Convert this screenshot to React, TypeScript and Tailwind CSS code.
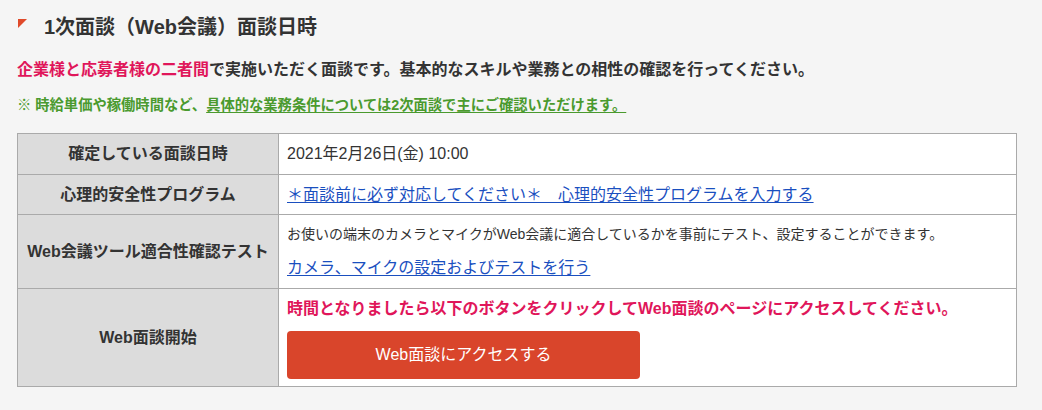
export default function App() {
  const font = { fontFamily: '"Liberation Sans", "Noto Sans CJK JP", sans-serif' };
  return (
    <div className="min-h-[410px] w-[1042px] bg-[#f5f5f5] text-[#333] px-[17px] pt-[12px]" style={font}>
      <div className="flex items-center h-[30px]">
        <span className="ml-[1px] mt-[-8px] w-0 h-0 border-t-[9px] border-t-[#e04a2a] border-r-[9px] border-r-transparent" />
        <h1 className="ml-[17px] text-[20px] font-bold leading-[30px] text-[#333]">1次面談（Web会議）面談日時</h1>
      </div>

      <p className="mt-[16px] text-[16px] font-bold leading-[24px]">
        <span className="text-[#e0165a]">企業様と応募者様の二者間</span>で実施いただく面談です。基本的なスキルや業務との相性の確認を行ってください。
      </p>

      <p className="mt-[13px] text-[14.3px] font-bold leading-[20px] text-[#4a9a2e]">
        ※ 時給単価や稼働時間など、<span className="underline underline-offset-2">具体的な業務条件については2次面談で主にご確認いただけます。 </span>
      </p>

      <table className="mt-[18px] w-[1000px] border-collapse border border-[#aaa] text-[16px]">
        <tbody>
          <tr className="h-[41px]">
            <th className="w-[261px] border border-[#aaa] bg-[#dcdcdc] font-bold text-center">確定している面談日時</th>
            <td className="border border-[#aaa] bg-white px-[8px]">2021年2月26日(金) 10:00</td>
          </tr>
          <tr className="h-[40px]">
            <th className="border border-[#aaa] bg-[#dcdcdc] font-bold text-center">心理的安全性プログラム</th>
            <td className="border border-[#aaa] bg-white px-[8px]">
              <a href="#" className="text-[#1a4fbf] underline underline-offset-2">＊面談前に必ず対応してください＊　心理的安全性プログラムを入力する</a>
            </td>
          </tr>
          <tr className="h-[74px]">
            <th className="border border-[#aaa] bg-[#dcdcdc] font-bold text-center">Web会議ツール適合性確認テスト</th>
            <td className="border border-[#aaa] bg-white px-[8px] pt-[9px] pb-[10px]">
              <p className="text-[14px] leading-[20px]">お使いの端末のカメラとマイクがWeb会議に適合しているかを事前にテスト、設定することができます。</p>
              <a href="#" className="mt-[14px] block text-[16px] leading-[20px] text-[#1a4fbf] underline underline-offset-2">カメラ、マイクの設定およびテストを行う</a>
            </td>
          </tr>
          <tr className="h-[98px]">
            <th className="border border-[#aaa] bg-[#dcdcdc] font-bold text-center">Web面談開始</th>
            <td className="border border-[#aaa] bg-white px-[8px] pt-[9px] pb-[7px]">
              <p className="text-[16px] font-bold leading-[20px] text-[#e0165a]">時間となりましたら以下のボタンをクリックしてWeb面談のページにアクセスしてください。</p>
              <button className="mt-[12px] w-[353px] h-[48px] rounded-[4px] bg-[#d9452b] text-white text-[16px]">Web面談にアクセスする</button>
            </td>
          </tr>
        </tbody>
      </table>
    </div>
  );
}
